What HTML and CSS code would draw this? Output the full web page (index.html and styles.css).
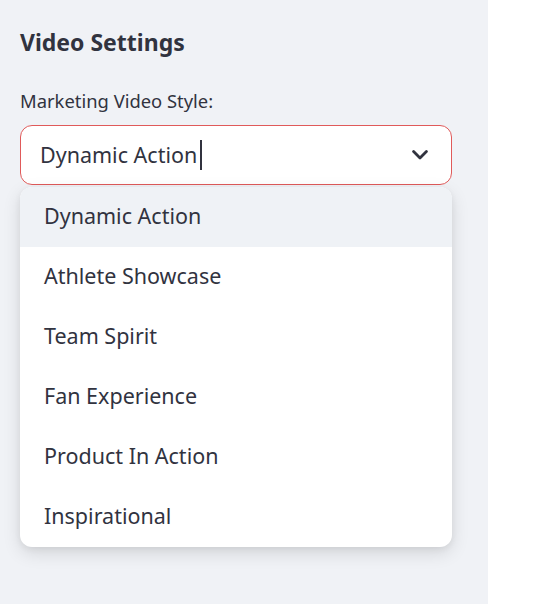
FILE: index.html
```html
<!DOCTYPE html>
<html>
<head>
<meta charset="utf-8">
<link rel="stylesheet" href="styles.css">
</head>
<body>
<div class="app">
  <aside class="sidebar">
    <h2 class="heading">Video Settings</h2>
    <label class="label">Marketing Video Style:</label>
    <div class="select-wrap">
      <div class="select">
        <span class="value">Dynamic Action</span><span class="caret"></span>
        <svg class="chevron" width="16" height="10" viewBox="0 0 16 10"><path d="M1.6 1.6 L8 8 L14.4 1.6" fill="none" stroke="#31333f" stroke-width="2.8" stroke-linecap="round" stroke-linejoin="round"/></svg>
      </div>
      <ul class="menu">
        <li class="option active">Dynamic Action</li>
        <li class="option">Athlete Showcase</li>
        <li class="option">Team Spirit</li>
        <li class="option">Fan Experience</li>
        <li class="option">Product In Action</li>
        <li class="option">Inspirational</li>
      </ul>
    </div>
  </aside>
  <main class="main"></main>
</div>
</body>
</html>
```
FILE: styles.css
```css
html, body {
  margin: 0;
  padding: 0;
}
body {
  font-family: "Noto Sans", "Lato", sans-serif;
  color: #31333f;
  background: #ffffff;
}
.app {
  display: flex;
  width: 534px;
  height: 604px;
  overflow: hidden;
}
.sidebar {
  width: 488px;
  flex: none;
  background: #f0f2f6;
  padding: 27px 36px 0 20px;
  box-sizing: border-box;
}
.main {
  flex: 1;
  background: #ffffff;
}
.heading {
  margin: 0;
  font-size: 23px;
  font-weight: 700;
  line-height: 30px;
}
.label {
  display: block;
  margin-top: 31px;
  font-size: 18.4px;
  line-height: 26px;
}
.select-wrap {
  position: relative;
  margin-top: 11px;
}
.select {
  height: 60px;
  box-sizing: border-box;
  border: 1px solid #e05a5a;
  border-radius: 12px;
  background: #ffffff;
  display: flex;
  align-items: center;
  padding: 0 23px 0 19px;
}
.value {
  font-size: 21.5px;
  margin-top: -2px;
}
.caret {
  display: inline-block;
  width: 2px;
  height: 30px;
  background: #31333f;
  margin-left: 3px;
}
.chevron {
  margin-left: auto;
}
.menu {
  position: absolute;
  left: 0;
  right: 0;
  top: 62px;
  margin: 0;
  padding: 0;
  list-style: none;
  background: #ffffff;
  border-radius: 12px;
  overflow: hidden;
  box-shadow: 0 6px 18px rgba(0, 0, 0, 0.12), 0 2px 6px rgba(0, 0, 0, 0.06);
}
.option {
  height: 60px;
  box-sizing: border-box;
  display: flex;
  align-items: center;
  padding: 0 24px 3px;
  font-size: 21.5px;
}
.option.active {
  background: #eff2f6;
}
```
